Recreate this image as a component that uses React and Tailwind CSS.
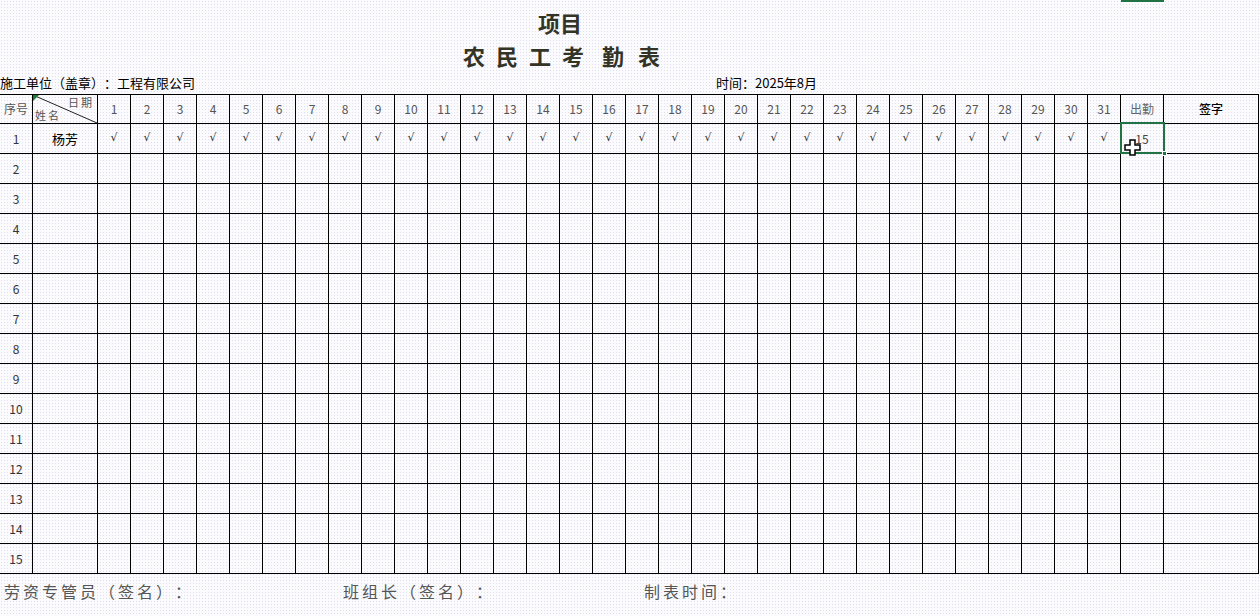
import React from "react";

const days = Array.from({ length: 31 }, (_, i) => i + 1);
const rows = Array.from({ length: 15 }, (_, i) => i + 1);

const cell = "border-r border-b border-black flex items-center justify-center";

const Cursor = () => (
  <svg width="18" height="18" viewBox="0 0 18 18" className="absolute left-[1124px] top-[139px]">
    <path
      d="M6 1h5v5h5v5h-5v5H6v-5H1V6h5z"
      fill="#fff"
      stroke="#000"
      strokeWidth="1.5"
      strokeLinejoin="miter"
    />
  </svg>
);

const App = () => {
  return (
    <div className="relative w-[1260px] h-[616px] overflow-hidden bg-[#fbfbfd] bg-[radial-gradient(circle,#dedef0_0.7px,transparent_0.9px)] bg-[length:3px_3px] font-['Noto_Sans_CJK_SC',sans-serif] text-[#222] [text-spacing-trim:space-all]">
      {/* column header highlight */}
      <div className="absolute left-[1121px] top-0 w-[43px] h-[2px] bg-[#217346]" />

      <div className="w-[1120px] pt-[9px] text-center text-[22px] leading-[26px] font-bold text-[#333326]">
        项目
      </div>
      <div className="mt-[7px] h-[26px] flex text-[22px] leading-[26px] font-bold text-[#333326] pl-[463px]">
        <span>农</span>
        <span className="ml-[11px]">民</span>
        <span className="ml-[11px]">工</span>
        <span className="ml-[11px]">考</span>
        <span className="ml-[18px]">勤</span>
        <span className="ml-[14px]">表</span>
      </div>

      <div className="mt-[7px] h-[16px] flex text-[13px] leading-[16px] text-black">
        <span className="w-[716px]">施工单位（盖章）：工程有限公司</span>
        <span>时间：2025年8月</span>
      </div>

      <div className="mt-[3px] border-t border-black grid grid-cols-[33px_65px_repeat(31,33px)_43px_95px] auto-rows-[30px] grid-rows-[29px] w-[1259px]">
        <div className={`${cell} text-[12px] text-[#555]`}>序号</div>
        <div className="relative border-r border-b border-black text-[11px] text-[#555]">
          <svg className="absolute inset-0" width="64" height="28" viewBox="0 0 64 28">
            <line x1="0" y1="0" x2="64" y2="28" stroke="#222" strokeWidth="1" />
            <polygon points="0,0 6,0 0,6" fill="#1e7b34" />
          </svg>
          <span className="absolute right-[3px] top-[-1px] leading-[16px] tracking-[2px]">日期</span>
          <span className="absolute left-[2px] bottom-[0px] leading-[16px] tracking-[2px]">姓名</span>
        </div>
        {days.map((d) => (
          <div key={d} className={`${cell} text-[12px] text-[#555]`}>
            {d}
          </div>
        ))}
        <div className={`${cell} text-[12px] text-[#666]`}>出勤</div>
        <div className={`${cell} text-[12px] text-black font-medium`}>签字</div>

        {rows.map((r) => (
          <React.Fragment key={r}>
            <div className={`${cell} text-[12px] text-[#333]`}>{r}</div>
            <div className={`${cell} text-[13px] text-black`}>{r === 1 ? "杨芳" : ""}</div>
            {days.map((d) => (
              <div key={d} className={`${cell} text-[11px] text-[#333] font-['DejaVu_Sans',sans-serif]`}>
                {r === 1 ? "√" : ""}
              </div>
            ))}
            <div className={`${cell} text-[12px] text-[#444]`}>{r === 1 ? "15" : ""}</div>
            <div className={cell} />
          </React.Fragment>
        ))}
      </div>

      {/* active cell selection */}
      <div className="absolute left-[1120px] top-[122px] w-[45px] h-[32px] border-2 border-[#217346]" />
      <div className="absolute left-[1162px] top-[151px] w-[5px] h-[5px] bg-[#217346] border border-white" />
      <Cursor />

      <div className="mt-[7px] h-[20px] flex text-[16px] leading-[20px] tracking-[3px] text-[#555]">
        <span className="w-[343px] pl-[4px]">劳资专管员（签名）：</span>
        <span className="w-[301px]">班组长（签名）：</span>
        <span>制表时间：</span>
      </div>
    </div>
  );
};

export default App;
